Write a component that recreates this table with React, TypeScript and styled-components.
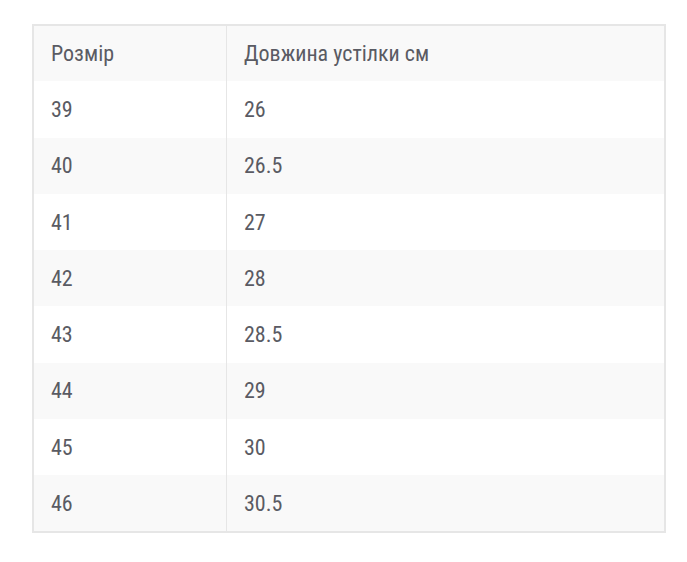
import styled, { createGlobalStyle } from "styled-components"

const GlobalStyle = createGlobalStyle`
  body {
    margin: 0;
    background: #ffffff;
  }
`

const Wrapper = styled.section`
  padding: 24px 21px 0 32px;
`

const Table = styled.table`
  width: 634px;
  border-collapse: collapse;
  border: 2px solid #e6e6e6;
  font-family: "Roboto Condensed", Roboto, "Liberation Sans", sans-serif;
  font-stretch: condensed;
  font-size: 22px;
  color: #5a5b63;
`

const Row = styled.tr<{ $striped: boolean }>`
  height: 56.3px;
  background: ${(p) => (p.$striped ? "#f9f9f9" : "#ffffff")};
`

const Cell = styled.td`
  padding: 0 17px;
  vertical-align: middle;
  text-align: left;
  font-weight: 400;

  &:first-child {
    width: 158px;
    border-right: 1px solid #e6e6e6;
  }
`

const rows = [
  ["39", "26"],
  ["40", "26.5"],
  ["41", "27"],
  ["42", "28"],
  ["43", "28.5"],
  ["44", "29"],
  ["45", "30"],
  ["46", "30.5"],
]

export default function App() {
  return (
    <Wrapper>
      <GlobalStyle />
      <Table>
        <thead>
          <Row $striped>
            <Cell as="th">Розмір</Cell>
            <Cell as="th">Довжина устілки см</Cell>
          </Row>
        </thead>
        <tbody>
          {rows.map(([size, length], i) => (
            <Row key={size} $striped={i % 2 === 1}>
              <Cell>{size}</Cell>
              <Cell>{length}</Cell>
            </Row>
          ))}
        </tbody>
      </Table>
    </Wrapper>
  )
}
